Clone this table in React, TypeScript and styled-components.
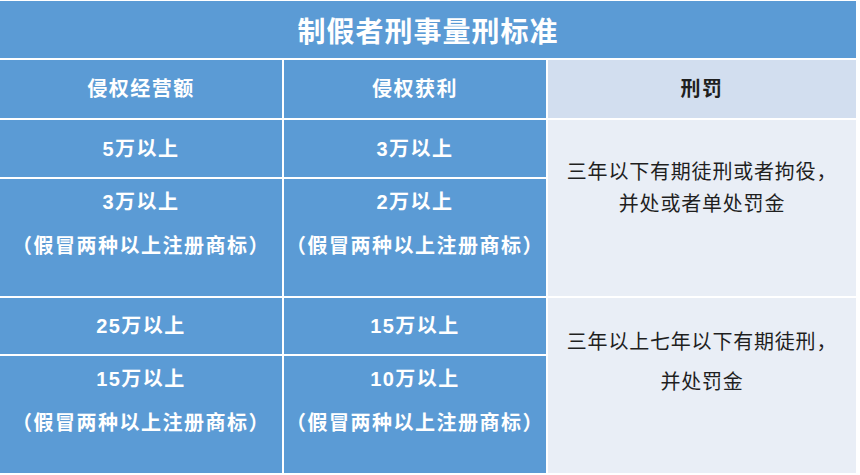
import React from "react";
import styled, { createGlobalStyle } from "styled-components";

const GlobalStyle = createGlobalStyle`
  html, body {
    margin: 0;
    padding: 0;
    background: #ffffff;
  }
  body {
    font-family: "Liberation Sans", "Noto Sans CJK SC", sans-serif;
  }
`;

const Page = styled.div`
  width: 860px;
  height: 475px;
  padding: 1px 4px 0 0;
  box-sizing: border-box;
  background: #ffffff;
`;

const Table = styled.div`
  display: grid;
  grid-template-columns: 282px 262px 308px;
  grid-template-rows: 57px 58px 57px 117px 56px 117px;
  grid-template-areas:
    "title title title"
    "h1 h2 h3"
    "a1 b1 p1"
    "a2 b2 p1"
    "a3 b3 p2"
    "a4 b4 p2";
  gap: 2px;
  background: #ffffff;
`;

const Title = styled.div`
  grid-area: title;
  background: #5b9bd5;
  color: #ffffff;
  font-size: 28px;
  font-weight: 700;
  letter-spacing: 1px;
  display: flex;
  align-items: center;
  justify-content: center;
`;

const Cell = styled.div<{ area: string; tone?: "blue" | "head" | "light"; top?: number }>`
  grid-area: ${(p) => p.area};
  background: ${(p) =>
    p.tone === "head" ? "#d2deef" : p.tone === "light" ? "#e9eef6" : "#5b9bd5"};
  color: ${(p) => (p.tone === "blue" || !p.tone ? "#ffffff" : "#1f1f1f")};
  font-size: 20px;
  font-weight: 700;
  line-height: 44px;
  letter-spacing: 1.5px;
  text-align: center;
  display: flex;
  flex-direction: column;
  align-items: center;
  justify-content: ${(p) => (p.top !== undefined ? "flex-start" : "center")};
  padding-top: ${(p) => p.top ?? 0}px;
  box-sizing: border-box;
`;

const Penalty = styled.div<{ lh: number }>`
  font-weight: 400;
  font-size: 20px;
  line-height: ${(p) => p.lh}px;
  letter-spacing: 0.8px;
  color: #1f1f1f;
`;

const Line = styled.span`
  display: block;
  white-space: nowrap;
`;

const note = "（假冒两种以上注册商标）";

export default function App() {
  return (
    <Page>
      <GlobalStyle />
      <Table>
        <Title>制假者刑事量刑标准</Title>

        <Cell area="h1">侵权经营额</Cell>
        <Cell area="h2">侵权获利</Cell>
        <Cell area="h3" tone="head">刑罚</Cell>

        <Cell area="a1">5万以上</Cell>
        <Cell area="b1">3万以上</Cell>
        <Cell area="a2" top={1}>
          <Line>3万以上</Line>
          <Line>{note}</Line>
        </Cell>
        <Cell area="b2" top={1}>
          <Line>2万以上</Line>
          <Line>{note}</Line>
        </Cell>
        <Cell area="p1" tone="light" top={36}>
          <Penalty lh={32}>
            <Line>三年以下有期徒刑或者拘役，</Line>
            <Line>并处或者单处罚金</Line>
          </Penalty>
        </Cell>

        <Cell area="a3">25万以上</Cell>
        <Cell area="b3">15万以上</Cell>
        <Cell area="a4" top={1}>
          <Line>15万以上</Line>
          <Line>{note}</Line>
        </Cell>
        <Cell area="b4" top={1}>
          <Line>10万以上</Line>
          <Line>{note}</Line>
        </Cell>
        <Cell area="p2" tone="light" top={24}>
          <Penalty lh={40}>
            <Line>三年以上七年以下有期徒刑，</Line>
            <Line>并处罚金</Line>
          </Penalty>
        </Cell>
      </Table>
    </Page>
  );
}
